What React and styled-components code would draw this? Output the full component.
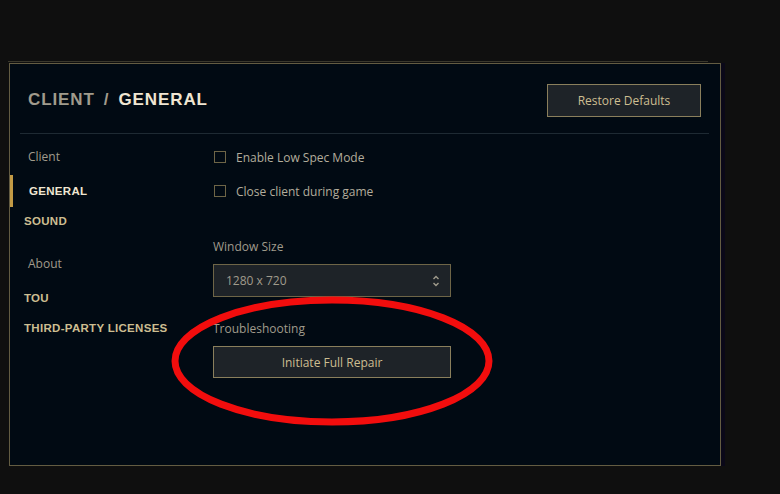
import styled, { createGlobalStyle } from 'styled-components';

const GlobalStyle = createGlobalStyle`
  html, body {
    margin: 0;
    padding: 0;
    background: #0f0f0f;
  }
  body {
    font-family: "Open Sans", "Noto Sans", sans-serif;
    -webkit-font-smoothing: antialiased;
  }
`

const navItems = [
  { label: 'Client', group: true },
  { label: 'GENERAL', active: true },
  { label: 'SOUND' },
  { label: 'About', group: true, spaced: true },
  { label: 'TOU' },
  { label: 'THIRD-PARTY LICENSES' },
]

const checkboxes = ['Enable Low Spec Mode', 'Close client during game']

const UpDown = () => (
  <svg width="8" height="14" viewBox="0 0 8 14" fill="none">
    <path d="M1.5 5 L4 2.5 L6.5 5" stroke="#a09b8c" strokeWidth="1.4" />
    <path d="M1.5 9 L4 11.5 L6.5 9" stroke="#a09b8c" strokeWidth="1.4" />
  </svg>
)

const App = () => {
  return (
    <Page>
      <GlobalStyle />
      <Rim />
      <Panel>
        <Header>
          <Title>
            <span className="parent">CLIENT</span>
            <span className="slash">/</span>
            <span className="current">GENERAL</span>
          </Title>
          <Button $w={154} $h={33}>Restore Defaults</Button>
        </Header>
        <Divider />
        <Body>
          <Nav>
            {navItems.map((item) => (
              <NavItem
                key={item.label}
                $group={item.group}
                $active={item.active}
                $spaced={item.spaced}
              >
                {item.label}
              </NavItem>
            ))}
          </Nav>
          <Content>
            <Checks>
              {checkboxes.map((c) => (
                <CheckRow key={c}>
                  <Box />
                  <span>{c}</span>
                </CheckRow>
              ))}
            </Checks>
            <Label $top={31}>Window Size</Label>
            <Select>
              <span>1280 x 720</span>
              <UpDown />
            </Select>
            <Label $top={22}>Troubleshooting</Label>
            <Button $w={238} $h={32}>Initiate Full Repair</Button>
          </Content>
        </Body>
      </Panel>
      <Circle width="334" height="140" viewBox="0 0 334 140">
        <ellipse cx="166" cy="69" rx="157" ry="61" fill="none" stroke="#f20d0d" strokeWidth="7" />
      </Circle>
    </Page>
  )
}

const Page = styled.div`
  position: relative;
  width: 780px;
  height: 494px;
  padding-top: 61px;
  box-sizing: border-box;
  overflow: hidden;
`

const Rim = styled.div`
  margin-left: 8px;
  width: 700px;
  height: 1px;
  background: #3a382c;
`

const Panel = styled.div`
  margin-top: 1px;
  margin-left: 9px;
  width: 712px;
  height: 403px;
  box-sizing: border-box;
  background: #010a13;
  border: 1.5px solid #635c42;
  box-shadow: 4px 0 0 #0a0818;
  display: flex;
  flex-direction: column;
`

const Header = styled.div`
  height: 69px;
  display: flex;
  align-items: center;
  justify-content: space-between;
  padding: 3px 19px 0 18px;
  box-sizing: border-box;
`

const Title = styled.h1`
  margin: 0;
  font-family: "Liberation Sans", Arial, sans-serif;
  font-weight: 700;
  font-size: 17px;
  letter-spacing: 0.9px;
  display: flex;
  gap: 9px;
  margin-top: 0;

  .parent, .slash {
    color: #a09b8c;
  }
  .current {
    color: #f0e6d2;
  }
`

const Button = styled.button`
  width: ${(p) => p.$w}px;
  height: ${(p) => p.$h}px;
  background: #1e2328;
  border: 1px solid #8a7f5c;
  color: #cdbe91;
  font-family: "Open Sans", "Noto Sans", sans-serif;
  font-size: 12px;
  font-weight: 500;
  padding: 0;
  cursor: pointer;
`

const Divider = styled.div`
  height: 1px;
  margin: 0 11px 0 10px;
  background: #1e2a33;
`

const Body = styled.div`
  display: grid;
  grid-template-columns: 203px 1fr;
  padding-top: 8px;
`

const Nav = styled.nav`
  display: flex;
  flex-direction: column;
`

const NavItem = styled.div`
  height: 30px;
  line-height: 30px;
  box-sizing: border-box;
  margin-top: ${(p) => (p.$spaced ? 13 : 0)}px;
  margin-bottom: ${(p) => (p.$group ? 4 : 0)}px;
  padding-left: ${(p) => (p.$group ? 18 : p.$active ? 16 : 14)}px;
  border-left: ${(p) => (p.$active ? '3px solid #c29a45' : 'none')};
  ${(p) => p.$active && 'height: 32px; margin-top: -1px; margin-bottom: -1px; line-height: 32px;'}
  font-size: ${(p) => (p.$group ? 12 : 11.5)}px;
  font-weight: ${(p) => (p.$group ? 400 : 700)};
  color: ${(p) => (p.$group ? '#a09b8c' : p.$active ? '#f0e6d2' : '#cdbe91')};
  font-family: ${(p) => (p.$group ? '"Open Sans", sans-serif' : '"Liberation Sans", Arial, sans-serif')};
  letter-spacing: ${(p) => (p.$group ? 0 : 0.3)}px;
  white-space: nowrap;
`

const Content = styled.div`
  display: flex;
  flex-direction: column;
  align-items: flex-start;
`

const Checks = styled.div`
  display: flex;
  flex-direction: column;
  gap: 4px;
`

const CheckRow = styled.label`
  height: 30px;
  display: flex;
  align-items: center;
  gap: 10px;
  color: #b3ad9c;
  font-size: 12px;
`

const Box = styled.span`
  width: 12px;
  height: 12px;
  box-sizing: border-box;
  border: 1.5px solid #6e6547;
  margin-left: 1px;
`

const Label = styled.div`
  height: 20px;
  line-height: 20px;
  margin-top: ${(p) => p.$top}px;
  margin-bottom: 7px;
  color: #a09b8c;
  font-size: 12px;
`

const Select = styled.div`
  width: 238px;
  height: 33px;
  box-sizing: border-box;
  background: #1e2328;
  border: 1px solid #6e6547;
  display: flex;
  align-items: center;
  justify-content: space-between;
  padding: 0 10px 0 12px;
  color: #a09b8c;
  font-size: 12px;
`

const Circle = styled.svg`
  position: absolute;
  left: 166px;
  top: 292px;
  pointer-events: none;
`

export default App
